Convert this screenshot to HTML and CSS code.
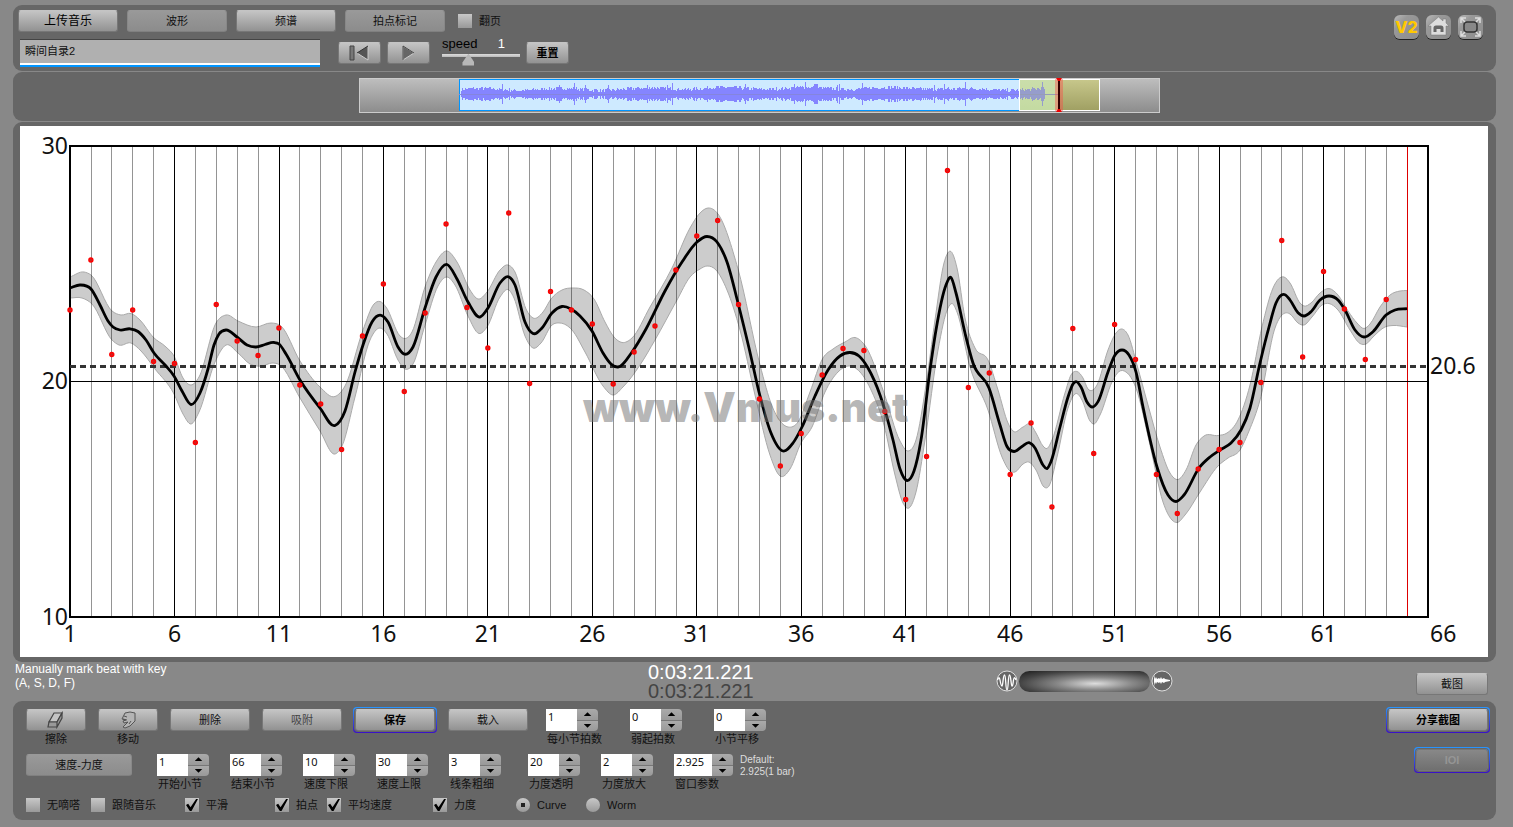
FILE: index.html
```html
<!DOCTYPE html>
<html lang="zh-CN">
<head>
<meta charset="utf-8">
<title>Vmus.net</title>
<link rel="stylesheet" href="styles.css">
</head>
<body>
<header class="panel header">
  <div class="header-main">
    <div class="modes">
      <button class="btn wide bright">上传音乐</button>
      <button class="btn wide dim">波形</button>
      <button class="btn wide">频谱</button>
      <button class="btn wide dim">拍点标记</button>
      <label class="check page-check"><input type="checkbox">翻页</label>
    </div>
    <div class="player">
      <input class="title-input" type="text" value="瞬间自录2" aria-label="曲目">
      <button class="btn transport" aria-label="回到开头">
        <svg width="24" height="18" viewBox="0 0 24 18"><path d="M2 2h4v14H2z" fill="#777" stroke="#444"/><path d="M20 2v14L9 9z" fill="#555"/><path d="M20 2v14L9 9" fill="none" stroke="#ccc"/><path d="M9 9 20 2" stroke="#333"/></svg>
      </button>
      <button class="btn transport" aria-label="播放">
        <svg width="24" height="18" viewBox="0 0 24 18"><path d="M6 2v14L17 9z" fill="#666" stroke="#ccc"/><path d="M6 16V2l11 7" fill="none" stroke="#444"/></svg>
      </button>
      <div class="speed">
        <div class="speed-text"><label for="speed">speed</label><output for="speed">1</output></div>
        <input id="speed" type="range" min="0" max="100" value="31">
      </div>
      <button class="btn reset">重置</button>
    </div>
  </div>
  <nav class="tools">
    <a class="tool v2" href="#v2">V2</a>
    <a class="tool" href="#home" aria-label="主页"><svg width="25" height="24" viewBox="0 0 25 24"><path d="M12.500 2 2 11h3v9h15v-9h3l-3-3V4h-3v2z" fill="#ddd" stroke="#777" stroke-width=".5"/><path d="M7.500 17v-4q0-2.500 2.500-2.500h5q2.500 0 2.500 2.500v4h-3v-3h-4v3z" fill="#666"/></svg></a>
    <a class="tool" href="#full" aria-label="全屏"><svg width="25" height="24" viewBox="0 0 25 24"><rect x="6" y="7" width="13" height="10" rx="3" fill="#888" stroke="#333" stroke-width="1.500"/><path d="M3 8V3h5M3 3l4 4M17 3h5v5M22 3l-4 4M3 16v5h5M3 21l4-4M17 21h5v-5M22 21l-4-4" fill="none" stroke="#ddd" stroke-width="1.500"/></svg></a>
  </nav>
</header>

<section class="panel overview"><svg id="wave" class="wave" viewBox="0 0 801 35" role="img" aria-label="波形概览"></svg></section>

<section class="panel chart-panel"><svg id="chart" class="chart" viewBox="20 126 1468 531" role="img" aria-label="速度曲线"></svg></section>

<section class="status">
  <p class="hint">Manually mark beat with key<br>(A, S, D, F)</p>
  <div class="times"><span>0:03:21.221</span><span class="total">0:03:21.221</span></div>
  <div class="volume">
    <svg width="22" height="24" viewBox="0 0 22 24"><circle cx="11" cy="12" r="10" fill="#666" stroke="#ddd"/><path d="M1.500 11c1-3 2-3 2.500 0s1 6 2 6 1-11 2.500-11 1 15 2.500 15 1-15 2.500-15 1.500 11 2.500 11 1-3 1.500-6 1.500-3 2.500 0" fill="none" stroke="#fff" stroke-width="1.300"/></svg>
    <span class="knob"></span>
    <svg width="22" height="24" viewBox="0 0 22 24"><circle cx="11" cy="12" r="10" fill="#666" stroke="#ddd"/><path d="M3 6l1 4 1-2 1 2 2-1 1 1 1-2 1 2 2-1 1 1 5 1v1l-5 1-1 1-2-1-1 2-1-2-1 1-2-1-1 2-1-2-1 4z" fill="#fff"/></svg>
  </div>
  <button class="btn shot">截图</button>
</section>

<section class="panel controls">
  <div class="rows">
    <div class="row row-edit" id="row-edit">
      <div class="tool-field"><button class="btn icon-btn" aria-labelledby="erase"><svg width="20" height="18" viewBox="0 0 20 18"><path d="M8 2h8l-5 9H3z" fill="#c4c4c4" stroke="#444" stroke-width="1.200"/><path d="M3 11h8v5H2zM11 11l5-9v5l-5 9z" fill="#999" stroke="#444" stroke-width="1.200"/></svg></button><span id="erase">擦除</span></div>
      <div class="tool-field"><button class="btn icon-btn" aria-labelledby="move"><svg width="20" height="18" viewBox="0 0 20 18"><path d="M17 2v8l-5 5-5 2-2-1 5-5-4 1-1-2 3-1-4-1 1-2 2-4 5-1z" fill="#b4b4b4" stroke="#555"/><path d="M6 5l3 1M5 8l4 1M13 10l-2 3" stroke="#555" fill="none"/></svg></button><span id="move">移动</span></div>
      <button class="btn mid">删除</button>
      <button class="btn mid dim-text">吸附</button>
      <span class="glow save"><button class="btn strong">保存</button></span>
      <button class="btn mid">载入</button>
    </div>
    <div class="row row-params" id="row-params">
      <button class="btn tempo dim">速度-力度</button>
    </div>
    <div class="row row-options">
      <label class="check w1"><input type="checkbox">无嘀嗒</label>
      <label class="check w2"><input type="checkbox">跟随音乐</label>
      <label class="check w3"><input type="checkbox" checked>平滑</label>
      <label class="check w4"><input type="checkbox" checked>拍点</label>
      <label class="check w5"><input type="checkbox" checked>平均速度</label>
      <label class="check w6"><input type="checkbox" checked>力度</label>
      <label class="check w7"><input type="radio" name="style" checked>Curve</label>
      <label class="check"><input type="radio" name="style">Worm</label>
    </div>
  </div>
  <div class="actions">
    <span class="glow share"><button class="btn strong">分享截图</button></span>
    <span class="glow ioi"><button class="btn" disabled>IOI</button></span>
  </div>
</section>
<script src="app.js"></script>
</body>
</html>
```
FILE: styles.css
```css
* { box-sizing: border-box; }
body {
  margin: 0;
  padding: 5px 17px 7px 13px;
  background: #888;
  color: #111;
  font: 12px/14px "Liberation Sans", "Noto Sans CJK SC", sans-serif;
}
button, input { font: inherit; color: inherit; }
svg { display: block; }

.panel { background: #666; border-radius: 9px; }

.btn {
  height: 22px;
  padding: 0;
  border: 1px solid #777;
  border-top-color: #c4c4c4;
  border-radius: 3px;
  background: linear-gradient(#c4c4c4, #929292);
  display: flex;
  align-items: center;
  justify-content: center;
  flex: none;
  font-size: 11px;
  white-space: nowrap;
}
.bright { font-size: 12px; color: #000; }
.dim { background: linear-gradient(#999, #8c8c8c); border-color: #999 #888 #808080; }
.dim-text { color: #444; }
.strong { font-weight: bold; color: #000; }

/* header */
.header { display: flex; justify-content: space-between; height: 66px; padding: 5px 13px 4px 5px; }
.modes { display: flex; align-items: center; gap: 9px; }
.wide { width: 100px; }
.page-check { margin-left: 4px; }
.player { display: flex; align-items: center; margin: 7px 0 0 2px; }
.title-input {
  width: 300px;
  height: 28px;
  margin-right: 18px;
  padding: 0 5px 6px;
  border: 0;
  border-top: 1px solid #444;
  border-bottom: 2px solid #0095ff;
  background: linear-gradient(#b0b0b0 0 23px, #fff 23px);
  font-size: 11px;
}
.transport { width: 43px; margin-right: 6px; }
.speed { width: 78px; margin: 0 6px; height: 28px; }
.speed-text { display: flex; justify-content: space-between; padding-right: 15px; font-size: 13px; line-height: 10px; color: #000; }
.speed-text output { color: #fff; }
.speed input { display: block; appearance: none; width: 100%; height: 12px; margin: 0; background: none; }
.speed input::-webkit-slider-runnable-track { height: 3px; background: linear-gradient(#ddd, #bbb); }
.speed input::-webkit-slider-thumb {
  appearance: none;
  width: 12px;
  height: 12px;
  background: #b8b8b8;
  clip-path: polygon(50% 0, 100% 75%, 100% 100%, 0 100%, 0 75%);
}
.reset { width: 43px; color: #000; font-weight: bold; }

.check { display: flex; align-items: center; gap: 7px; font-size: 11px; line-height: 14px; flex: none; white-space: nowrap; }
.check input {
  appearance: none;
  display: grid;
  place-items: center;
  flex: none;
  width: 14px;
  height: 14px;
  margin: 0;
  background: linear-gradient(#c8c8c8, #999);
}
.check input[type=checkbox]:checked::before {
  content: "";
  width: 12px;
  height: 12px;
  background: #000;
  clip-path: polygon(0 50%, 18% 40%, 38% 68%, 84% 0, 100% 0, 46% 100%, 32% 100%);
}
.check input[type=radio] { border-radius: 50%; }
.check input[type=radio]:checked::before { content: ""; width: 4px; height: 4px; background: #222; }

.tools { display: flex; gap: 7px; padding-top: 5px; }
.tool {
  width: 25px;
  height: 24px;
  border-radius: 6px;
  background: linear-gradient(135deg, #bbb, #999 30%, #8c8c8c);
  box-shadow: 0 1px 0 #222;
}
.v2 { color: #ffc800; font: 800 16px/24px Inter, "Liberation Sans", sans-serif; text-align: center; text-decoration: none; }

/* overview */
.overview { display: flex; justify-content: center; margin-top: 1px; height: 49px; padding: 6px 0 8px 9px; }
.wave { width: 801px; max-width: 90%; height: 35px; }

/* chart */
.chart-panel { margin-top: 1px; padding: 4px 8px 5px 7px; }
.chart { width: 100%; height: auto; background: #fff; }
.chart text { font-family: "Noto Sans", sans-serif; font-size: 23px; fill: #111; }
.chart .watermark { font-family: Inter, sans-serif; font-weight: 900; font-size: 41px; fill: #707070; fill-opacity: .52; }
.middle { text-anchor: middle; }
.end { text-anchor: end; }

/* status */
.status {
  display: grid;
  grid-template-columns: 633px 350px 1fr auto;
  height: 39px;
  padding: 0 8px 0 2px;
}
.hint { margin: 0; color: #fff; }
.times { display: flex; flex-direction: column; padding-top: 1px; color: #fff; font-size: 20px; line-height: 19px; }
.total { color: #444; }
.volume { display: flex; align-items: flex-start; padding-top: 7px; margin-left: -2px; }
.knob {
  width: 131px;
  height: 21px;
  margin: 2px 1px 0;
  border-radius: 11px;
  background: radial-gradient(ellipse at 58% 60%, #ddd, #888 35%, #444 70%, #222 95%);
}
.shot { width: 72px; margin-top: 11px; }

/* controls */
.controls { display: flex; justify-content: space-between; height: 119px; padding: 6px 6px 8px 13px; }
.row { display: flex; align-items: flex-start; }
.row-edit { height: 45px; padding-top: 2px; gap: 12px; }
.row-params { height: 45px; padding-top: 2px; gap: 21px; }
.tool-field { display: flex; flex-direction: column; align-items: center; font-size: 11px; line-height: 16px; }
.icon-btn { width: 60px; }
.mid { width: 80px; }
.tempo { width: 106px; margin-right: 4px; }
.glow { display: block; padding: 2px; border-radius: 4px; background: linear-gradient(#2896ff, #3a10c8); }
.glow .btn { width: 100%; box-shadow: 0 0 0 1px #666; }
.glow .btn:disabled { background: linear-gradient(#888, #707070); border-color: #777; color: #959595; font-weight: bold; }
.save { width: 84px; margin: -2px -1px 0; }
.share { width: 104px; }
.ioi { width: 76px; }
.actions { display: flex; flex-direction: column; align-items: flex-end; gap: 14px; }

.field { width: 52px; flex: none; white-space: nowrap; font-size: 11px; line-height: 16px; }
.field.first { margin-left: 6px; }
.field.gap { margin-left: 20px; }
.field.extra { margin-left: 6px; }
.field.long { width: 59px; }
.field > label { display: block; padding-left: 1px; }
.stepper { display: flex; height: 22px; }
.stepper input { flex: 1; width: 0; border: 0; padding: 0 2px 6px; background: #fff; font-size: 11px; font-family: "Noto Sans", sans-serif; }
.arrows { width: 21px; display: flex; flex-direction: column; border-radius: 0 4px 4px 0; overflow: hidden; }
.arrows button { flex: 1; border: 0; padding: 0; display: grid; place-items: center; background: linear-gradient(#aaa, #999); }
.arrows button + button { border-top: 1px solid #777; }
.arrows button::before { content: ""; width: 8px; height: 4px; background: #000; clip-path: polygon(50% 0, 100% 100%, 0 100%); }
.arrows button + button::before { clip-path: polygon(0 0, 100% 0, 50% 100%); }
.default { margin: 0 0 0 -14px; color: #ddd; font-size: 10px; line-height: 12px; }

.row-options { gap: 11px; padding-top: 1px; }
.w1 { width: 54px; }
.w2 { width: 83px; }
.w3 { width: 79px; }
.w4 { width: 41px; }
.w5 { width: 95px; }
.w6 { width: 72px; }
.w7 { width: 59px; }
```
FILE: app.js
```js
const NS = 'http://www.w3.org/2000/svg';
function add(parent, tag, attrs, text) {
  const el = document.createElementNS(NS, tag);
  for (const k in attrs) el.setAttribute(k, attrs[k]);
  if (text !== undefined) el.textContent = text;
  parent.appendChild(el);
  return el;
}

/* Smooth cubic path through [x, y, x, y, ...], tangents from the local parabola */
function smooth(flat, cmd) {
  const p = [];
  for (let i = 0; i < flat.length; i += 2) p.push([flat[i], flat[i + 1]]);
  const n = p.length, d = [], h = [], m = [];
  for (let i = 0; i < n - 1; i++) {
    h.push(p[i + 1][0] - p[i][0]);
    d.push((p[i + 1][1] - p[i][1]) / h[i]);
  }
  for (let i = 0; i < n; i++) {
    if (i === 0) m.push(d[0]);
    else if (i === n - 1) m.push(d[n - 2]);
    else m.push((h[i] * d[i - 1] + h[i - 1] * d[i]) / (h[i - 1] + h[i]));
  }
  let s = cmd + p[0].join(',');
  for (let i = 0; i < n - 1; i++) {
    const t = h[i] / 3;
    s += `C${p[i][0] + t},${p[i][1] + m[i] * t} ${p[i + 1][0] - t},${p[i + 1][1] - m[i + 1] * t} ${p[i + 1].join(',')}`;
  }
  return s;
}
function reversed(flat) {
  const out = [];
  for (let i = flat.length - 2; i >= 0; i -= 2) out.push(flat[i], flat[i + 1]);
  return out;
}

const mean = [70,288,80,285,91,289,100,305,108,321,113,327,120,330,130,328.8,138,331.5,146,340,154,353,165,365,174,376,182,391,191,404.5,200,393,208,369,214,345,219,334,226,330,237,337,247,345,256,347,265,344.5,274,342.5,279,344,286,354,300,380,320,408,335,425.5,345,411,355,372,363,345,372,322,381,315.3,388,322,398,347,404,354,413,347,425,308,436,277,447,264.5,457,279,468,302,480,317,488,308,500,283,509,277,515,285,525,322,533,333.5,542,328,552,313,562,306.5,571,309,580,316,592,331,603,353,611,364,618,367,632,352,646,329,665,291,682,262,697,242,707,236.5,717,242,727,262,738,303,749,348,760,396,771,433,783,451,793,443,802,427,815,396,828,370,840,356,850,352.5,859,356,868,368,880,395,893,440,900,469,907,480.5,914,471,921,440,930,370,936,330,946,285,951,277.5,956,293,965,333,973,363,989,388,1000,425,1007,446.5,1014,451.5,1022,446.5,1029,442.7,1035,448,1043,465,1047,468.6,1051,461.6,1060,427,1068,397,1073,384,1076,381.6,1081,387,1087,402,1092,407,1098,401.6,1108,372,1115,355,1122,350,1129,355,1136,372,1143,407,1157,467,1168,495,1176,501.5,1184,495,1199,468,1210,457,1220,450,1231,443,1241,430,1250,408,1260,363,1269,327,1276,303,1285,294.7,1290,300,1298,312.7,1304,316,1311,311.7,1320,300,1329,296,1338,300,1345,310,1355,330,1364,337,1373,331.7,1386,315,1395,310,1407,308.7];
const upper = [70,277,84,272,91,275,112,311,121,315,131,313.5,140,320,153,337,166,347,174,356,183,378,191,385,199,377,216,323,226,315,238,321,256,327,271,323,281,326,300,361,320,387,335,396.5,345,386,363,330,374,304,380,301.5,386,307,400,336,405,338.5,412,332,425,287,436,262,447,251,457,262,470,290,478,299,487,292,500,270,508,265,515,272,526,309,533,318,543,312,551,299,562,290,573,288,584,290,594,299,605,322,614,337,622,342.5,632,338,650,307,672,268,690,228,700,213,708,208,718,214,738,269,760,365,772,406,780,421,788,427,798,422,810,392,823,358,833,349,845,342,855,337.5,866,347,884,393,900,441,908,451,916,440,926,385,935,320,944,263,951,251.5,957,268,965,318,975,348,988,360,998,390,1008,423,1013,431,1023,427,1030,424,1036,433,1043,446,1047,448.5,1052,440,1065,393,1071,375,1077,371.5,1083,378,1088,389,1092,390.5,1097,385,1108,350,1116,333,1121,329,1128,335,1137,365,1148,405,1160,447,1170,473,1178,479.5,1186,470,1196,445,1204,436,1218,435.5,1227,433,1238,420,1250,385,1262,327,1273,288,1284,277,1290,283,1300,303,1304,306,1311,303,1320,293,1329,288.5,1338,295,1348,311,1357,323,1364,328.5,1370,324,1380,307,1390,295,1400,291,1407,290.5];
const lower = [70,298,82,298,92,304,112,340,119,345,131,343,141,351,155,369,174,394,183,414,191,424,199,412,215,362,226,345,238,353,250,364,262,366,272,363,280,365,300,398,320,431,335,454,342,446,355,397,370,340,380,328,387,334,398,360,405,369,413,364,425,325,438,286,447,277,455,285,468,316,479,333.5,487,327,500,297,509,290,514,298,525,336,533,348,541,343,552,325,560,323,572,330,585,352,603,386,613,395,623,387,640,365,655,340,677,300,690,277,700,269,707,266,716,270,727,290,740,330,755,395,770,455,780,476,790,469,801,443,812,427,825,392,838,372,848,366,860,372,872,392,884,425,895,475,903,503,909,508,916,492,925,440,938,350,948,308,952,303.5,957,312,970,367,988,410,1002,457,1010,471,1015,472,1023,464,1029,462,1036,470,1044,487,1049,486,1057,457,1068,408,1076,393.5,1082,400,1090,421,1094,424,1100,415,1112,382,1119,371.5,1126,372,1136,388,1150,445,1163,502,1172,520,1177,522.5,1185,515,1200,492,1218,466,1228,458,1240,450,1249,431,1260,400,1275,328,1285,313,1290,314,1298,323,1304,325,1312,317,1322,305,1329,303.5,1338,310,1350,330,1360,343.5,1366,344,1373,337,1385,327,1393,325.5,1407,327];
const beats = [310,260,354.5,310,361.5,363.5,442.5,304.5,341,355.5,328,385,404,449.5,336,284,391.5,313,224,307.5,348,213,383.5,291.5,310,324,384,352,326,270,236,220.5,304.5,399,466,433.5,375,348.5,350.5,411.5,499.5,456.5,170.5,387.5,373,474.5,423,507,328.5,453.5,324.5,359.5,474.5,513.5,469,449.5,442.5,382.5,240.5,357,271.5,309,359.5,299.5];

const chart = document.getElementById('chart');
const step = 1358 / 65;
const beatX = i => 70 + i * step;
add(chart, 'path', { d: smooth(upper, 'M') + smooth(reversed(lower), 'L') + 'Z', fill: '#ccc', stroke: '#aaa' });
for (let i = 1; i < 65; i++) {
  const bar = i % 5 === 0, x = Math.round(beatX(i) - 0.35) + 0.5;
  add(chart, 'line', { x1: x, x2: x, y1: 146, y2: 617, stroke: i === 64 ? '#d00' : bar ? '#000' : 'rgba(0,0,0,.42)' });
}
add(chart, 'line', { x1: 70, x2: 1428, y1: 381.5, y2: 381.5, stroke: '#000' });
add(chart, 'rect', { x: 70, y: 146, width: 1358, height: 471, fill: 'none', stroke: '#000', 'stroke-width': 2 });
add(chart, 'line', { x1: 70, x2: 1428, y1: 366.5, y2: 366.5, stroke: '#333', 'stroke-width': 3, 'stroke-dasharray': '6 4' });
add(chart, 'path', { d: smooth(mean, 'M'), fill: 'none', stroke: '#000', 'stroke-width': 2.8 });
beats.forEach((y, i) => add(chart, 'circle', { cx: beatX(i), cy: y, r: 2, fill: '#c22', stroke: '#f00', 'stroke-width': 1.4 }));
add(chart, 'text', { x: 583, y: 422, class: 'watermark' }, 'www.Vmus.net');
[['30', 154], ['20', 389], ['10', 625]].forEach(([t, y]) => add(chart, 'text', { x: 68, y, class: 'end' }, t));
for (let i = 0; i < 65; i += 5) add(chart, 'text', { x: beatX(i), y: 642, class: 'middle' }, i + 1);
add(chart, 'text', { x: 1430, y: 642 }, '66');
add(chart, 'text', { x: 1430, y: 374 }, '20.6');

/* Overview waveform */
const wave = document.getElementById('wave');
const defs = add(wave, 'defs', {});
function gradient(id, from, to) {
  const g = add(defs, 'linearGradient', { id, x1: 0, x2: 0, y1: 0, y2: 1 });
  add(g, 'stop', { offset: 0, 'stop-color': from });
  add(g, 'stop', { offset: 1, 'stop-color': to });
}
gradient('grey', '#bebebe', '#8c8c8c');
gradient('olive', '#c8c88c', '#9f9f62');
gradient('lime', '#ddf2c8', '#d2ecb8');
add(wave, 'rect', { x: .5, y: .5, width: 800, height: 34, fill: 'url(#grey)', stroke: '#ccc' });
add(wave, 'rect', { x: 100.5, y: 1.5, width: 600, height: 31, fill: '#ceeaff', stroke: '#0095ff' });
add(wave, 'rect', { x: 660, y: 1, width: 40, height: 32, fill: 'url(#lime)' });
add(wave, 'rect', { x: 700, y: 1, width: 40, height: 32, fill: 'url(#olive)' });
const peaks = { 43: 10, 100: 9, 115: 11, 126: 9, 149: 9, 188: 9, 208: 9, 213: 11, 286: 10, 335: 10, 346: 12, 355: 10, 356: 10, 357: 10, 358: 10, 378: 9, 380: 10, 403: 11, 475: 9, 485: 10, 506: 12, 583: 12 };
let seed = 7, bars = '';
for (let i = 2; i < 586; i++) {
  seed = (seed * 16807) % 2147483647;
  const r = seed / 2147483647;
  const a = Math.round(peaks[i] || 3 + Math.sin(i / 13) + (i > 190 && i < 490 ? 1 : 0) + r * 3.5);
  bars += `M${100.5 + i} ${16 - a}V${16 + a}`;
}
add(wave, 'path', { d: bars, stroke: '#8585ff' });
add(wave, 'path', { d: 'M100 16.500h600', stroke: '#8585dd' });
add(wave, 'rect', { x: 660, y: 1, width: 40, height: 32, fill: '#b0c080', 'fill-opacity': .4 });
add(wave, 'rect', { x: 660.5, y: 1.5, width: 80, height: 31, fill: 'none', stroke: '#fff' });
add(wave, 'rect', { x: 696, y: 1, width: 8, height: 32, fill: '#f44', 'fill-opacity': .4 });
add(wave, 'path', { d: 'M700 1v32', stroke: '#300', 'stroke-width': 2 });
add(wave, 'path', { d: 'M697 0h6l-2 3h-2zM697 34h6l-2-3h-2z', fill: '#e00' });

/* Numeric fields */
function field(row, name, value, cls) {
  const id = 'f-' + row.childElementCount + '-' + row.id;
  row.insertAdjacentHTML('beforeend',
    `<div class="field ${cls || ''}"><div class="stepper"><input id="${id}" type="text" value="${value}"><span class="arrows"><button aria-label="${name} +"></button><button aria-label="${name} -"></button></span></div><label for="${id}">${name}</label></div>`);
}
const edit = document.getElementById('row-edit');
field(edit, '每小节拍数', 1, 'first');
field(edit, '弱起拍数', 0, 'gap');
field(edit, '小节平移', 0, 'gap');
const params = document.getElementById('row-params');
[['开始小节', 1], ['结束小节', 66], ['速度下限', 10], ['速度上限', 30], ['线条粗细', 3], ['力度透明', 20, 'extra'], ['力度放大', 2], ['窗口参数', 2.925, 'long']]
  .forEach(f => field(params, ...f));
params.insertAdjacentHTML('beforeend', '<p class="default">Default:<br>2.925(1 bar)</p>');
```
